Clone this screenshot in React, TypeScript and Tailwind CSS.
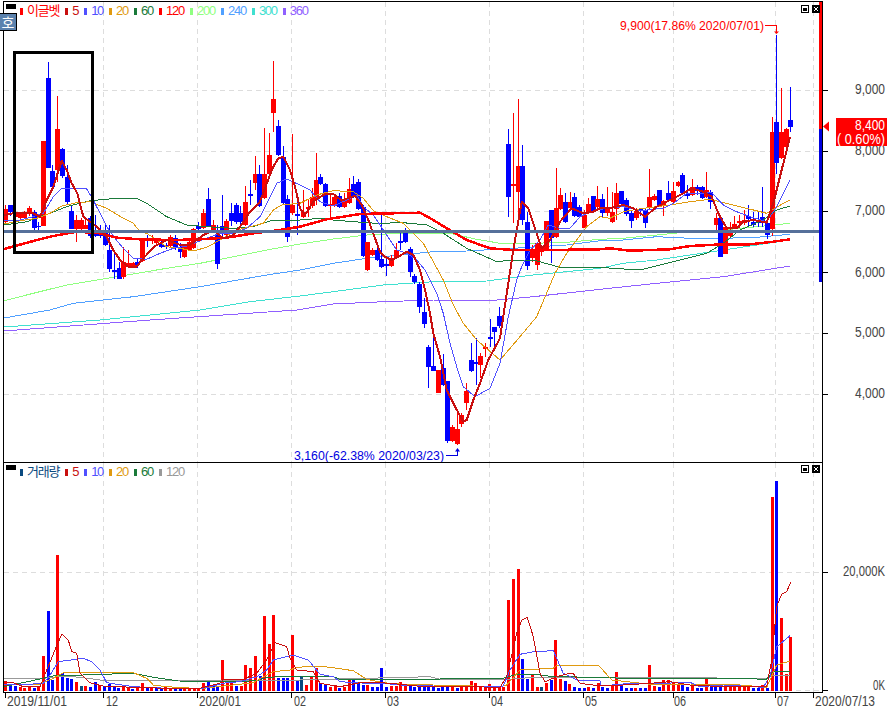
import React from "react";

type C = [number, string, number, number, number, number];
const P = (ox: number, oy: number, a: number[][]) => a.map(([x, y]) => `${(x / 3 + ox).toFixed(1)},${(y / 3 + oy).toFixed(1)}`).join(" ");
const RED = "#ff0000", BLUE = "#0000ff";

const segA: C[] = [[17,'r',205,224,209,222],[31,'b',205,216,205,212],[45,'r',210,218,212,217],[60,'r',212,219,213,218],[74,'r',211,219,213,218],[88,'r',206,216,208,214],[102,'b',210,232,212,228],[116,'b',222,230,226,227],[130,'r',141,226,141,226],[145,'b',62,168,78,168],[158,'b',165,190,171,187],[172,'r',96,182,129,170],[187,'b',148,178,149,176],[201,'b',165,205,177,202],[215,'b',205,229,211,229],[229,'r',215,242,220,229],[243,'r',218,230,220,229],[257,'r',218,229,225,229],[272,'b',216,238,218,236],[287,'b',215,237,233,236],[300,'b',225,238,234,236],[315,'b',224,246,233,245],[329,'b',225,272,250,269],[343,'b',250,279,270,272],[357,'b',262,279,268,279],[371,'r',247,279,262,277],[385,'r',250,268,263,267],[399,'r',262,268,263,267],[413,'b',258,268,262,265],[428,'r',238,262,241,261],[441,'b',235,247,239,241],[456,'r',235,244,239,241],[470,'r',238,245,240,243],[484,'b',241,248,244,247],[498,'b',243,249,245,247],[512,'r',235,247,237,246],[526,'b',235,250,238,248],[540,'b',243,258,247,252],[553,'r',245,258,245,257],[567,'r',241,251,242,250],[581,'r',228,249,229,248],[596,'b',222,231,226,229],[610,'r',209,229,213,228],[625,'b',188,227,199,226],[640,'r',220,232,225,230],[653,'b',225,269,235,264],[667,'b',195,237,226,231],[680,'r',219,236,221,235],[695,'b',203,226,213,221],[710,'b',203,224,205,222],[722,'b',206,225,213,222],[737,'r',186,226,202,225],[750,'b',180,205,194,196],[765,'r',156,190,174,183],[778,'b',165,207,174,206],[793,'r',128,199,174,198],[808,'r',133,175,155,174],[820,'r',61,132,99,113],[835,'b',120,156,126,155],[850,'b',146,204,157,203],[862,'b',195,242,199,237],[877,'r',134,215,205,213],[892,'b',200,235,214,216]];
const segB: C[] = [[10,'r',190,218,212,217],[24,'r',200,217,207,209],[38,'r',188,208,197,206],[48,'r',153,205,180,200],[62,'b',174,185,177,184],[76,'b',183,207,184,206],[90,'r',193,217,204,206],[104,'r',195,207,197,206],[118,'b',193,208,196,207],[132,'r',193,208,200,207],[147,'r',178,204,189,203],[160,'b',176,198,184,197],[175,'b',179,210,182,209],[190,'b',205,257,207,256],[203,'r',242,271,242,270],[217,'r',248,256,250,255],[232,'b',248,261,250,260],[245,'b',212,268,259,267],[259,'b',257,276,264,266],[274,'r',255,267,260,266],[288,'r',243,258,250,257],[302,'b',230,250,241,243],[317,'b',228,243,233,242],[331,'b',247,277,249,272],[344,'b',274,284,276,282],[358,'b',282,313,284,307],[373,'b',298,328,312,324],[386,'b',345,388,347,367],[400,'b',335,371,366,371],[415,'r',370,393,370,393],[430,'b',354,386,368,385],[443,'b',381,443,381,441],[458,'r',425,442,427,441],[472,'r',412,445,429,444],[485,'r',413,427,415,424],[499,'r',383,410,391,403],[514,'b',343,372,360,371],[528,'b',338,385,362,364],[541,'r',353,378,356,365],[556,'r',343,357,347,349],[570,'b',319,347,337,339],[583,'b',327,350,327,332],[598,'b',307,328,316,326],[625,'b',129,217,144,197],[640,'r',113,223,184,186],[655,'r',99,220,166,192],[668,'b',145,225,166,220],[682,'b',212,270,222,266],[697,'r',245,262,250,258],[712,'r',243,270,243,265],[725,'r',245,256,247,252],[740,'r',221,251,221,250],[754,'b',210,263,210,238],[768,'r',168,238,208,237],[782,'r',188,210,195,209],[796,'b',193,223,202,222],[810,'r',192,210,202,208],[824,'b',193,217,197,216],[838,'b',205,218,207,217],[852,'r',210,228,215,228],[866,'r',198,214,204,213],[880,'b',196,212,196,211],[893,'r',186,208,199,207]];
const segC: C[] = [[37,'b',194,218,199,213],[52,'r',187,216,207,213],[66,'r',192,223,212,222],[80,'r',183,220,193,209],[95,'b',191,205,191,204],[109,'b',198,216,200,214],[124,'b',211,228,213,221],[138,'r',208,220,211,218],[152,'b',208,216,209,211],[165,'b',208,228,210,223],[179,'r',169,209,197,208],[193,'r',194,201,196,200],[207,'b',190,207,190,206],[221,'r',200,216,201,206],[235,'b',181,202,193,200],[250,'r',182,203,191,202],[264,'r',181,187,182,186],[278,'b',173,194,175,193],[293,'b',185,199,194,196],[307,'r',179,196,187,195],[322,'b',185,195,187,191],[336,'b',186,199,187,198],[350,'r',172,198,190,197],[362,'b',190,209,192,202],[378,'r',213,230,218,225],[392,'b',218,257,218,257],[407,'r',225,254,227,254],[420,'r',222,237,230,236],[434,'r',216,229,224,228],[448,'r',215,228,221,223],[462,'r',210,225,220,223],[476,'b',205,227,216,219],[490,'b',212,227,222,225],[504,'b',212,227,220,223],[518,'b',187,227,217,222],[532,'b',222,239,223,235],[546,'r',117,236,132,229],[559,'b',35,174,122,163],[574,'r',88,159,132,158],[588,'r',128,148,129,147],[601,'b',87,132,120,127]];

const candles = [
  ...segA.map((c) => ({ c, x: c[0] / 3 })),
  ...segB.map((c) => ({ c, x: c[0] / 3 + 300 })),
  ...segC.map((c) => ({ c, x: c[0] / 3 + 590 })),
];

type V = [number, string, number];
const volA: V[] = [[15,'r',665],[30,'b',675],[46,'b',678],[61,'r',680],[73,'r',683],[88,'r',682],[103,'b',683],[115,'r',680],[130,'r',588],[145,'b',453],[158,'b',660],[172,'r',285],[187,'b',640],[201,'b',655],[215,'b',657],[229,'r',667],[243,'n',678],[257,'r',678],[271,'b',680],[285,'b',666],[299,'r',675],[313,'b',677],[328,'b',673],[342,'b',680],[356,'b',683],[370,'r',675],[385,'r',682],[398,'b',687],[412,'r',683],[427,'r',670],[441,'b',682],[455,'r',682],[469,'b',682],[484,'b',687],[497,'r',682],[512,'r',685],[526,'b',685],[540,'b',685],[554,'r',683],[568,'r',685],[582,'r',687],[596,'r',687],[610,'r',670],[625,'b',665],[639,'b',675],[653,'b',680],[667,'r',600],[681,'r',670],[695,'r',665],[709,'b',678],[723,'r',678],[737,'r',615],[751,'r',623],[766,'r',588],[780,'b',648],[794,'r',468],[808,'r',552],[821,'r',465],[835,'b',655],[849,'b',653],[863,'b',653],[877,'r',525],[892,'b',663]];
const volB: V[] = [[5,'n',348],[20,'r',375],[34,'r',347],[49,'r',325],[62,'b',370],[76,'b',375],[91,'r',380],[105,'r',375],[118,'b',385],[133,'r',380],[147,'r',360],[161,'b',358],[175,'b',370],[190,'b',375],[203,'r',375],[217,'b',382],[232,'b',380],[245,'b',325],[259,'b',380],[274,'r',378],[288,'r',378],[302,'r',367],[316,'r',378],[330,'b',375],[344,'b',380],[358,'b',378],[372,'b',380],[386,'b',375],[400,'b',380],[414,'b',385],[428,'b',380],[443,'b',380],[457,'r',380],[471,'b',385],[485,'r',380],[499,'r',375],[513,'r',362],[527,'r',370],[541,'r',378],[555,'r',378],[569,'r',372],[583,'r',385],[597,'r',382],[611,'r',380],[625,'r',120],[640,'r',57],[655,'r',27],[668,'b',297],[682,'b',357],[697,'r',345],[712,'r',382],[725,'n',382],[739,'r',368],[754,'b',360],[767,'r',240],[781,'r',358],[796,'b',363],[809,'r',372],[823,'b',380],[838,'b',385],[853,'b',385],[866,'r',380],[880,'b',385],[895,'r',370]];
const volC: V[] = [[10,'b',683],[24,'r',670],[38,'b',680],[52,'b',683],[66,'r',678],[80,'r',637],[95,'b',678],[109,'b',683],[123,'b',683],[137,'r',683],[151,'b',683],[165,'b',683],[178,'r',615],[193,'r',678],[207,'b',680],[221,'r',660],[235,'r',660],[250,'r',670],[264,'r',672],[278,'b',670],[292,'b',680],[307,'r',672],[321,'b',683],[335,'b',683],[349,'r',658],[363,'b',675],[377,'b',680],[391,'b',678],[405,'r',675],[420,'r',680],[434,'r',680],[448,'r',680],[462,'r',680],[476,'r',680],[490,'b',685],[504,'b',685],[518,'r',675],[532,'b',685],[547,'r',110],[559,'b',63],[574,'r',475],[588,'r',643],[602,'r',530]];

const vols = [
  ...volA.map(([zx, c, zy]) => ({ x: zx / 3, c, y: 460 + zy / 3 })),
  ...volB.map(([zx, c, zy]) => ({ x: zx / 3 + 300, c, y: 560 + zy / 3 })),
  ...volC.map(([zx, c, zy]) => ({ x: zx / 3 + 590, c, y: 460 + zy / 3 })),
];

const Line = ({ pts, color, w = 1 }: { pts: string; color: string; w?: number }) => (
  <polyline points={pts} fill="none" stroke={color} strokeWidth={w} strokeLinejoin="round" shapeRendering="crispEdges" />
);

const vGrid = [103.5, 197.5, 291.5, 385.5, 489.5, 583.5, 673.5, 775.5, 813.5];
const mainY = [90.5, 151.5, 211.5, 272.5, 333.5, 394.5];
const FONT = "[font-family:'Liberation_Sans','Noto_Sans_CJK_KR',sans-serif]";

const ma5 = [
  P(0, 0, [[12,645],[40,640],[70,640],[100,640],[120,650],[140,600],[160,560],[185,482],[200,510],[215,550],[232,580],[250,650],[270,665],[290,680],[320,710]]),
  P(0, 170, [[340,240],[360,270],[385,290],[410,290],[430,265],[465,228],[500,210],[540,225],[570,225],[610,195],[640,180],[670,205],[700,195],[720,170],[750,125],[780,95],[810,15]]),
  P(0, 0, [[820,500],[835,475],[850,470],[870,510],[885,560],[900,625]]),
  P(300, 80, [[15,405],[40,365],[75,342],[100,342],[125,362],[150,352],[165,348],[185,375],[205,420],[225,475],[240,515],[255,530],[275,540],[295,530],[320,515],[340,525],[360,570]]),
  P(300, 250, [[375,120],[390,190],[400,250],[420,320],[440,420],[465,470],[490,515],[500,510],[520,450],[540,400],[565,330],[600,265],[625,100],[640,0]]),
  P(300, 80, [[665,365],[685,385],[705,445],[725,505],[750,480],[780,425],[815,385],[850,400],[880,395]]),
  P(590, 0, [[30,625],[60,625],[100,615],[130,625],[165,650],[200,620],[240,600],[280,580],[305,565],[340,575],[365,590],[385,640],[410,685],[440,685],[460,665],[490,660],[530,668],[550,610],[570,530],[590,450],[600,410]]),
].join(" ");
const ma10 = [
  P(0, 0, [[12,660],[60,660],[100,650],[130,640],[160,590],[185,565],[220,565],[260,567],[280,600]]),
  P(0, 170, [[320,170],[345,205],[370,235],[400,265],[440,268],[480,250],[520,235],[560,228],[620,205],[660,190],[700,190],[740,175],[780,140],[810,80],[830,40],[860,27],[900,45]]),
  P(300, 80, [[30,330],[60,365],[100,378],[140,360],[170,345],[190,380],[220,405],[250,450],[290,510],[320,520],[350,540],[375,570]]),
  P(300, 250, [[380,70],[410,130],[430,190],[450,280],[470,350],[490,410],[525,440],[570,415],[600,340],[625,200],[650,90]]),
  P(300, 80, [[665,560],[690,510],[720,480],[745,435],[780,445],[810,445],[840,410],[870,395]]),
  P(590, 0, [[50,625],[100,620],[140,630],[170,630],[220,625],[250,610],[290,580],[330,580],[365,578],[400,615],[440,635],[480,650],[530,665],[560,620],[580,580],[600,540]]),
].join(" ");
const ma20 = [
  P(0, 0, [[12,672],[60,662],[110,655],[150,640],[185,618],[230,608],[270,605],[320,625],[370,655],[400,670],[420,695]]),
  P(0, 170, [[440,190],[470,210],[500,230],[540,235],[580,243],[620,232],[660,210],[710,180],[750,170],[790,160],[820,120],[845,105],[900,100]]),
  P(300, 80, [[50,345],[100,332],[160,335],[190,355],[220,392],[260,410],[310,430],[370,490],[430,600]]),
  P(300, 250, [[430,90],[460,165],[490,220],[530,270],[600,330],[660,260],[710,200],[765,70]]),
  P(300, 80, [[800,520],[860,440],[900,410]]),
  P(590, 0, [[60,655],[100,635],[160,625],[240,615],[300,605],[360,598],[430,615],[530,640],[580,610],[600,600]]),
].join(" ");
const ma60 = [
  P(0, 0, [[12,675],[80,665],[150,640],[200,620],[270,602],[350,595],[410,595],[440,610],[500,650],[560,675],[620,680],[700,685],[760,680],[820,660],[900,660]]),
  P(300, 80, [[60,415],[100,420],[160,425],[230,430],[310,428],[380,435],[430,460],[500,505],[590,545],[640,540],[700,540],[780,562],[900,562]]),
  P(590, 0, [[70,805],[150,810],[230,790],[350,760],[400,730],[450,690],[520,660],[560,630],[600,618]]),
].join(" ");
const ma120 = [
  P(0, 170, [[12,237],[100,213],[160,198],[230,185],[300,190],[350,203],[420,208],[520,210],[600,208],[680,203],[760,190],[840,180],[900,170]]),
  P(300, 80, [[80,418],[180,402],[360,398],[400,420],[440,445],[500,480],[570,505],[640,510],[750,510],[900,508]]),
  P(590, 0, [[60,745],[120,752],[240,748],[300,738],[400,733],[480,733],[550,725],[600,718]]),
].join(" ");
const ma200 = [
  P(0, 170, [[12,392],[100,370],[200,345],[350,320],[500,295],[600,280],[700,260],[800,240],[900,222]]),
  P(300, 80, [[100,477],[200,465],[300,460],[450,460],[530,478],[600,490],[700,490],[800,487],[900,478]]),
  P(590, 0, [[100,715],[200,705],[300,695],[400,690],[500,680],[600,670]]),
].join(" ");
const ma240 = "4,318 " + [
  P(0, 170, [[150,420],[220,400],[400,380],[600,350],[800,315],[900,300]]),
  P(300, 80, [[100,550],[200,535],[300,525],[400,515],[500,513],[640,505],[800,495],[900,482]]),
  P(590, 0, [[100,720],[200,710],[300,715],[400,715],[500,712],[600,703]]),
].join(" ");
const ma300 = "4,327 100,320 " + [
  P(0, 170, [[600,420],[750,395],[900,378]]),
  P(300, 80, [[100,635],[250,615],[400,605],[560,603],[700,585],[900,565]]),
  P(590, 0, [[100,790],[200,780],[300,765],[400,750],[500,735],[600,720]]),
].join(" ");
const ma360 = "4,331 150,320 297,310 " + [
  P(300, 80, [[100,672],[250,665],[400,660],[560,663],[700,650],[900,628]]),
  P(590, 0, [[200,850],[400,830],[600,798]]),
].join(" ");

const v5 = [
  P(0, 460, [[12,665],[40,668],[70,680],[120,680],[140,630],[165,570],[185,522],[205,540],[215,575],[230,580],[240,640],[270,668],[310,678],[400,682],[500,685],[600,685],[660,670],[670,658],[730,658],[770,640],[800,600],[825,548],[860,560],[870,595],[890,630]]),
  P(300, 560, [[40,335],[60,370],[120,380],[180,368],[240,368],[270,370],[350,378],[400,378],[500,380],[600,382],[620,350],[650,220],[665,180],[682,172],[700,230],[720,340],[735,365],[770,350],[800,342],[820,340],[840,370],[900,378]]),
  P(590, 460, [[100,675],[180,670],[240,665],[300,675],[400,680],[530,680],[545,600],[560,440],[575,402],[590,395],[602,367]]),
].join(" ");
const v10 = [
  P(0, 460, [[12,675],[100,672],[130,670],[150,645],[175,605],[250,595],[275,605],[300,630],[320,668],[400,680],[500,685],[600,687],[680,668],[720,665],[770,650],[800,630],[820,600],[880,585],[900,592]]),
  P(300, 560, [[25,300],[60,343],[100,350],[120,365],[200,370],[250,370],[300,375],[400,378],[500,378],[610,378],[630,330],[660,283],[700,275],[760,272],[790,340],[830,360],[900,362]]),
  P(590, 460, [[30,678],[100,672],[220,670],[300,667],[330,680],[400,675],[520,682],[540,650],[560,560],[600,527]]),
].join(" ");
const v20 = [
  P(0, 460, [[12,672],[120,672],[160,655],[190,638],[400,638],[440,655],[460,675],[500,680],[600,686],[700,675],[760,668],[790,650],[820,635],[870,630],[890,622]]),
  P(300, 560, [[60,318],[110,325],[160,332],[200,358],[250,368],[300,372],[400,375],[600,380],[620,375],[660,330],[760,325],[770,316],[890,316]]),
  P(590, 460, [[0,615],[25,615],[65,660],[140,668],[200,675],[300,672],[450,675],[530,682],[560,615],[600,603]]),
].join(" ");
const v60 = [
  P(0, 460, [[12,680],[130,655],[160,648],[400,640],[450,650],[500,658],[535,663],[700,665],[770,662],[800,652],[900,648]]),
  P(300, 560, [[100,350],[120,358],[400,358],[470,355],[610,355],[650,343],[720,345],[760,350],[900,352]]),
  P(590, 460, [[100,655],[300,655],[500,657],[530,657],[550,635],[600,633]]),
].join(" ");
const v120 = [
  P(0, 460, [[12,655],[130,655],[190,648],[240,652],[300,660],[900,660]]),
  P(300, 560, [[390,350],[420,358],[600,360],[700,352],[900,352]]),
  P(590, 460, [[530,655],[545,645],[600,645]]),
].join(" ");

const mainLegend: [string, string][] = [["#ff0000","5"],["#5050ff","10"],["#e09a10","20"],["#1a7a3a","60"],["#ff0000","120"],["#90ff80","200"],["#50a0ff","240"],["#40e0d0","300"],["#9060ff","360"]];
const volLegend: [string, string][] = [["#ff0000","5"],["#5050ff","10"],["#e09a10","20"],["#1a7a3a","60"],["#999999","120"]];

function Legend({ title, color, items, dark }: { title: string; color: string; items: [string, string][]; dark?: string }) {
  return (
    <div className={`absolute left-[2px] top-[1px] flex items-center gap-[6px] text-[13px] leading-[16px] tracking-[-1.25px] ${FONT}`}>
      <span className="w-[10px] h-[5px] bg-black mr-[-2px] self-start mt-[1px]" />
      <span className="flex items-center gap-[4px]">
        <span className="w-[3px] h-[7px]" style={{ background: color }} />
        <span style={{ color }}>{title}</span>
      </span>
      {items.map(([c, t], i) => (
        <span key={t} className="flex items-center gap-[4px]">
          <span className="w-[3px] h-[7px]" style={{ background: i === 0 ? dark : c }} />
          <span style={{ color: i === 0 ? dark : c }}>{t}</span>
        </span>
      ))}
    </div>
  );
}

function WinButtons({ top }: { top: string }) {
  return (
    <div className={`absolute right-[2px] ${top} flex gap-[3px]`}>
      <span className="w-[8px] h-[8px] border border-black bg-white flex items-center justify-center">
        <span className="w-[4px] h-[3px] bg-black" />
      </span>
      <span className="w-[8px] h-[8px] bg-black flex items-center justify-center">
        <svg width="6" height="6" viewBox="0 0 6 6" shapeRendering="crispEdges"><path d="M1 1 L5 5 M5 1 L1 5" stroke="#fff" strokeWidth="1" /></svg>
      </span>
    </div>
  );
}

const Mono = ({ x, y, t, fill = "#444", anchor = "start", size = "text-[14px]" }: { x: number; y: number; t: string; fill?: string; anchor?: "start" | "end"; size?: string }) => (
  <text x={x} y={y} textAnchor={anchor} fill={fill} textLength={t.length * 6} lengthAdjust="spacingAndGlyphs" className={`${size} ${FONT}`}>{t}</text>
);

export default function App() {
  return (
    <div className="relative w-[887px] h-[708px] bg-white overflow-hidden">
      <div className="flex h-[693px] pt-[1px]">
        <div className="w-[820px] ml-[3px] flex flex-col border-l border-r border-black">
          <section className="relative h-[461px] border-t border-black">
            <svg className="block w-full h-full" viewBox="4 2 818 460">
              {mainY.map((y) => <line key={y} x1={4} x2={820} y1={y} y2={y} stroke="#dddddd" strokeDasharray="5 4" shapeRendering="crispEdges" />)}
              {vGrid.map((x) => <line key={x} x1={x} x2={x} y1={2} y2={462} stroke="#dddddd" strokeDasharray="5 4" shapeRendering="crispEdges" />)}
              <Line pts={ma360} color="#9060ff" />
              <Line pts={ma300} color="#40e0d0" />
              <Line pts={ma240} color="#50a0ff" />
              <Line pts={ma200} color="#90ff80" />
              {candles.map(({ c, x }, i) => {
                const col = c[1] === "r" ? RED : BLUE;
                const wx = Math.round(x - 0.5);
                return (
                  <g key={i} shapeRendering="crispEdges">
                    <rect x={wx} y={c[2]} width={1} height={c[3] - c[2]} fill={col} />
                    <rect x={wx - 2} y={c[4]} width={5} height={Math.max(c[5] - c[4], 1)} fill={col} />
                  </g>
                );
              })}
              <Line pts={ma60} color="#1a7a3a" />
              <Line pts={ma20} color="#e09a10" />
              <Line pts={ma10} color="#5050ff" />
              <Line pts={ma120} color="#ff0000" w={2.5} />
              <Line pts={ma5} color="#c80f0f" w={2} />
              <rect x={4} y={230} width={818} height={3} fill="#56709a" shapeRendering="crispEdges" />
              <rect x={14.5} y={52.5} width={78} height={200} fill="none" stroke="#000" strokeWidth={3} shapeRendering="crispEdges" />
              <Mono x={620} y={30} t="9,900(17.86% 2020/07/01)" fill="#ff0000" size="text-[13px]" />
              <path d="M765 25.5 H776.5 V33" fill="none" stroke="#ff0000" shapeRendering="crispEdges" />
              <path d="M774 31.5 H779 L776.5 34 Z" fill="#ff0000" />
              <Mono x={294} y={460} t="3,160(-62.38% 2020/03/23)" fill="#0000e0" size="text-[13px]" />
              <path d="M446 455.5 H457.5 V450" fill="none" stroke="#0000e0" shapeRendering="crispEdges" />
              <path d="M455 451.5 H460 L457.5 448 Z" fill="#0000e0" />
              <rect x={819} y={2} width={3} height={127} fill="#ff0000" shapeRendering="crispEdges" />
              <rect x={819} y={129} width={3} height={153} fill="#0000e0" shapeRendering="crispEdges" />
            </svg>
            <Legend title="이글벳" color="#ff0000" dark="#c80f0f" items={mainLegend} />
            <WinButtons top="top-[3px]" />
          </section>
          <section className="relative flex-1 border-t border-b border-black">
            <svg className="block w-full h-full" viewBox="4 463 818 229">
              <line x1={4} x2={820} y1={572.5} y2={572.5} stroke="#dddddd" strokeDasharray="5 4" shapeRendering="crispEdges" />
              <line x1={4} x2={820} y1={690.5} y2={690.5} stroke="#dddddd" strokeDasharray="5 4" shapeRendering="crispEdges" />
              {vGrid.map((x) => <line key={x} x1={x} x2={x} y1={463} y2={692} stroke="#dddddd" strokeDasharray="5 4" shapeRendering="crispEdges" />)}
              {vols.map((v, i) => (
                <rect key={i} x={Math.round(v.x - 1.5)} y={v.y} width={3} height={691 - v.y} fill={v.c === "r" ? RED : v.c === "b" ? BLUE : "#0a4a80"} shapeRendering="crispEdges" />
              ))}
              <Line pts={v120} color="#999999" />
              <Line pts={v60} color="#1a7a3a" />
              <Line pts={v20} color="#e09a10" />
              <Line pts={v10} color="#5050ff" />
              <Line pts={v5} color="#c80f0f" />
            </svg>
            <Legend title="거래량" color="#0a4a80" dark="#c80f0f" items={volLegend} />
            <WinButtons top="top-[2px]" />
          </section>
        </div>
        <div className="flex-1 relative">
          <svg className="block w-full h-[692px]" viewBox="823 1 64 692">
            {[90.5, 151.5, 211.5, 272.5, 333.5, 394.5, 572.5, 690.5].map((y) => <line key={y} x1={823} x2={828} y1={y} y2={y} stroke="#000" shapeRendering="crispEdges" />)}
            <Mono x={885} y={94} anchor="end" t="9,000" />
            <Mono x={885} y={155} anchor="end" t="8,000" />
            <Mono x={885} y={215} anchor="end" t="7,000" />
            <Mono x={885} y={277} anchor="end" t="6,000" />
            <Mono x={885} y={337} anchor="end" t="5,000" />
            <Mono x={885} y={398} anchor="end" t="4,000" />
            <Mono x={885} y={576} anchor="end" t="20,000K" />
            <Mono x={885} y={690} anchor="end" t="0K" />
            <path d="M823 126.5 L829 121.5 V131.5 Z" fill="#ff0000" />
            <rect x={836} y={118} width={51} height={28} fill="#ff0000" shapeRendering="crispEdges" />
            <Mono x={885} y={130} anchor="end" t="8,400" fill="#ffffff" />
            <Mono x={885} y={144} anchor="end" t="( 0.60%)" fill="#ffffff" />
          </svg>
        </div>
      </div>
      <svg className="block w-[887px] h-[15px]" viewBox="0 693 887 15">
        {[5.5, 103.5, 197.5, 291.5, 385.5, 489.5, 583.5, 673.5, 775.5, 813.5].map((x) => <line key={x} x1={x} x2={x} y1={693} y2={698} stroke="#000" shapeRendering="crispEdges" />)}
        {([[7,"2019/11/01"],[106,"12"],[199,"2020/01"],[294,"02"],[387,"03"],[491,"04"],[585,"05"],[674,"06"],[777,"07"],[815,"2020/07/13"]] as [number,string][]).map(([x, t]) => (
          <Mono key={t} x={x} y={706} t={t} />
        ))}
      </svg>
      <div className="absolute left-0 top-[13px] w-[17px] h-[18px] bg-[#5b82ad] border border-l-0 border-black text-white text-[14px] leading-[16px] text-center [font-family:'Noto_Sans_CJK_KR',sans-serif]">호</div>
    </div>
  );
}
